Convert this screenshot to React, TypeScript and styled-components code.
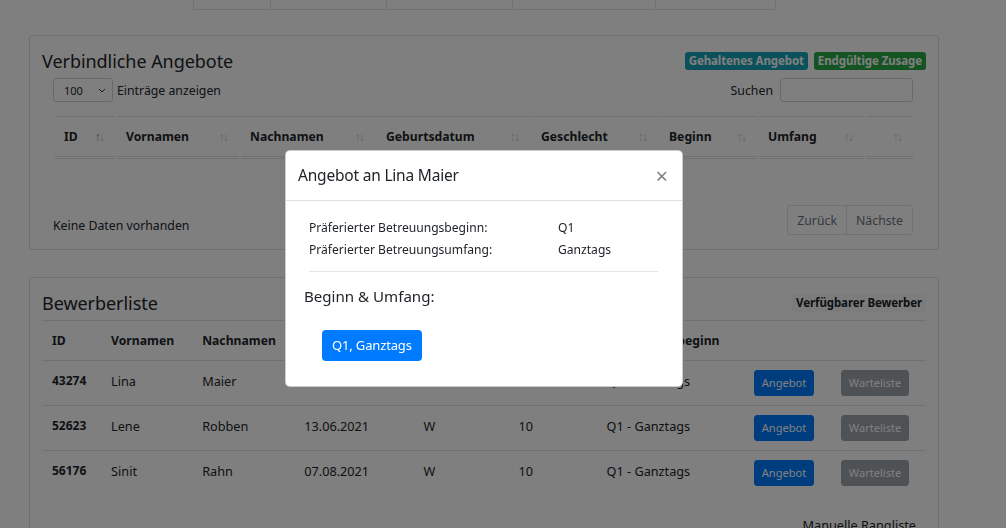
import React from "react";
import styled, { createGlobalStyle } from "styled-components";

const GlobalStyle = createGlobalStyle`
  html, body { margin: 0; padding: 0; background: #fff; }
  body {
    font-family: "Noto Sans", "Open Sans", sans-serif;
    font-size: 12.5px;
    color: #212529;
    overflow: hidden;
  }
  * { box-sizing: border-box; }
`;

const Page = styled.div`
  padding: 0 67px 0 29px;
  height: 528px;
  overflow: hidden;
`;

const TopTable = styled.div`
  display: flex;
  margin-left: 164px;
  width: 583px;
  height: 10px;
  border-left: 1px solid #dee2e6;
  border-bottom: 1px solid #dee2e6;
`;

const TopCell = styled.div<{ $w: number }>`
  width: ${(p) => p.$w}px;
  border-right: 1px solid #dee2e6;
`;

const Card = styled.div<{ $mt: number }>`
  margin-top: ${(p) => p.$mt}px;
  border: 1px solid rgba(0, 0, 0, 0.125);
  border-radius: 4px;
  padding: 12px 12px 14px;
  background: #fff;
`;

const CardHeader = styled.div`
  display: flex;
  align-items: center;
  justify-content: space-between;
  height: 26px;
`;

const Title = styled.h4`
  margin: 0;
  font-size: 18px;
  letter-spacing: -0.05px;
  font-weight: 400;
  line-height: 26px;
`;

const Badges = styled.div`
  display: flex;
  gap: 6px;
`;

const Badge = styled.span<{ $bg: string; $fg: string }>`
  display: inline-block;
  background: ${(p) => p.$bg};
  color: ${(p) => p.$fg};
  font-size: 11.5px;
  font-weight: 700;
  line-height: 18px;
  padding: 0 4px;
  letter-spacing: -0.1px;
  border-radius: 3px;
`;

const Wrapper = styled.div`
  padding: 0 13px 0 11px;
`;

const Controls = styled.div`
  display: flex;
  justify-content: space-between;
  align-items: center;
  margin-top: 4px;
  height: 24px;
`;

const Length = styled.label`
  display: flex;
  align-items: center;
  gap: 4px;
  font-size: 12.3px;
`;

const Select = styled.div`
  display: flex;
  align-items: center;
  justify-content: space-between;
  width: 60px;
  height: 24px;
  border: 1px solid #ced4da;
  border-radius: 3px;
  padding: 0 6px 0 10px;
  font-size: 11px;
`;

const Search = styled.label`
  display: flex;
  align-items: center;
  gap: 7px;
  font-size: 12.3px;
`;

const Input = styled.div`
  width: 133px;
  height: 24px;
  border: 1px solid #ced4da;
  border-radius: 3px;
`;

const DataTable = styled.table`
  width: 100%;
  margin-top: 14px;
  border-collapse: separate;
  border-spacing: 2px 0;
  table-layout: fixed;
`;

const SortTh = styled.th`
  border-top: 1px solid #dee2e6;
  border-bottom: 3px double #dee2e6;
  padding: 9px 10px 9px 9px;
  line-height: 21px;
  font-size: 12.2px;
  font-weight: 700;
  text-align: left;
`;

const ThInner = styled.div`
  display: flex;
  justify-content: space-between;
  align-items: center;
`;

const Arrows = styled.span<{ $active?: boolean }>`
  font-size: 12.5px;
  font-weight: 400;
  letter-spacing: -2px;
  padding-right: 2px;
  color: #cdcdcd;
  & > b {
    font-weight: 400;
    color: ${(p) => (p.$active ? "#8a8a8a" : "#cdcdcd")};
  }
`;

const Footer = styled.div`
  display: flex;
  justify-content: space-between;
  align-items: flex-start;
  margin-top: 46px;
  height: 30px;
  font-size: 12.3px;
`;

const InfoText = styled.span`
  padding-top: 10px;
  line-height: 21px;
`;

const Pager = styled.div`
  display: flex;
`;

const PageBtn = styled.span<{ $first?: boolean }>`
  display: inline-flex;
  align-items: center;
  height: 30px;
  padding: 0 9px;
  border: 1px solid #dee2e6;
  color: #6c757d;
  font-size: 12.3px;
  margin-left: ${(p) => (p.$first ? 0 : -1)}px;
  border-radius: ${(p) => (p.$first ? "3px 0 0 3px" : "0 3px 3px 0")};
`;

const ListTable = styled.table`
  width: 100%;
  margin-top: 4px;
  border-collapse: collapse;
  table-layout: fixed;
`;

const Th = styled.th`
  border-top: 1px solid #dee2e6;
  padding: 9px 10px;
  line-height: 21px;
  font-size: 12.2px;
  font-weight: 700;
  text-align: left;
  white-space: nowrap;
`;

const Td = styled.td<{ $bold?: boolean }>`
  border-top: 1px solid #dee2e6;
  padding: 7px 10px 11px;
  line-height: 26px;
  font-size: ${(p) => (p.$bold ? 12 : 12.7)}px;
  font-weight: ${(p) => (p.$bold ? 700 : 400)};
  vertical-align: middle;
  white-space: nowrap;
`;

const BtnCell = styled.td`
  border-top: 1px solid #dee2e6;
  padding: 9px 10px;
  vertical-align: middle;
  white-space: nowrap;
`;

const SmallBtn = styled.span<{ $variant: "primary" | "secondary" }>`
  display: inline-block;
  font-size: 11.1px;
  line-height: 18px;
  padding: 3px 7px;
  border-radius: 3px;
  border: 1px solid ${(p) => (p.$variant === "primary" ? "#007bff" : "#6c757d")};
  background: ${(p) => (p.$variant === "primary" ? "#007bff" : "#6c757d")};
  color: #fff;
  opacity: ${(p) => (p.$variant === "primary" ? 1 : 0.65)};
`;

const ListFooter = styled.div`
  display: flex;
  justify-content: flex-end;
  padding: 21px 10px 20px 0;
  font-size: 12.7px;
`;

const Backdrop = styled.div`
  position: fixed;
  inset: 0;
  background: rgba(0, 0, 0, 0.5);
  display: flex;
  align-items: flex-start;
  padding: 150px 0 0 285px;
`;

const Modal = styled.div`
  width: 398px;
  background: #fff;
  border: 1px solid rgba(0, 0, 0, 0.2);
  border-radius: 5px;
`;

const ModalHeader = styled.div`
  display: flex;
  justify-content: space-between;
  align-items: center;
  padding: 9px 13px 10px 12px;
  border-bottom: 1px solid #dee2e6;
`;

const ModalTitle = styled.h5`
  margin: 0;
  font-size: 15.5px;
  letter-spacing: -0.2px;
  font-weight: 400;
  line-height: 30px;
`;

const Close = styled.span`
  font-size: 22px;
  font-weight: 400;
  line-height: 1;
  color: #000;
  opacity: 0.5;
  margin-right: 1px;
`;

const ModalBody = styled.div`
  padding: 16px 19px 25px 18px;
`;

const Info = styled.div`
  margin: 0 5px;
`;

const InfoRow = styled.div`
  display: grid;
  grid-template-columns: 249px 1fr;
  line-height: 22px;
  font-size: 12.1px;
`;

const Hr = styled.hr`
  margin: 10px 5px 0;
  border: 0;
  border-top: 1px solid rgba(0, 0, 0, 0.1);
`;

const Subheading = styled.div`
  margin-top: 11px;
  font-size: 15.1px;
  line-height: 26px;
`;

const Choice = styled.span`
  display: inline-block;
  margin: 21px 0 0 18px;
  background: #007bff;
  color: #fff;
  border-radius: 4px;
  padding: 0 10px;
  line-height: 31px;
  font-size: 13px;
  letter-spacing: -0.15px;
`;

const Chevron = () => (
  <svg width="8" height="5" viewBox="0 0 8 5" fill="none">
    <path d="M1 1l3 3 3-3" stroke="#343a40" strokeWidth="1" />
  </svg>
);

const sortCols: { label: string; w: number; active?: boolean }[] = [
  { label: "ID", w: 60, active: true },
  { label: "Vornamen", w: 122 },
  { label: "Nachnamen", w: 134 },
  { label: "Geburtsdatum", w: 153 },
  { label: "Geschlecht", w: 126 },
  { label: "Beginn", w: 97 },
  { label: "Umfang", w: 105 },
  { label: "", w: 47 },
];

const listCols: { label: string; w: number }[] = [
  { label: "ID", w: 59 },
  { label: "Vornamen", w: 91 },
  { label: "Nachnamen", w: 102 },
  { label: "Geburtsdatum", w: 119 },
  { label: "Geschlecht", w: 95 },
  { label: "Punkte", w: 88 },
  { label: "Betreuungsbeginn", w: 147 },
  { label: "", w: 87 },
  { label: "", w: 95 },
];

const rows = [
  ["43274", "Lina", "Maier", "01.04.2021", "W", "10", "Q1 - Ganztags"],
  ["52623", "Lene", "Robben", "13.06.2021", "W", "10", "Q1 - Ganztags"],
  ["56176", "Sinit", "Rahn", "07.08.2021", "W", "10", "Q1 - Ganztags"],
];

export default function App() {
  return (
    <>
      <GlobalStyle />
      <Page>
        <TopTable>
          {[77, 116, 126, 143, 120].map((w, i) => (
            <TopCell key={i} $w={w} />
          ))}
        </TopTable>

        <Card $mt={25}>
          <CardHeader>
            <Title>Verbindliche Angebote</Title>
            <Badges>
              <Badge $bg="#17a2b8" $fg="#fff">Gehaltenes Angebot</Badge>
              <Badge $bg="#28a745" $fg="#fff">Endgültige Zusage</Badge>
            </Badges>
          </CardHeader>
          <Wrapper>
            <Controls>
              <Length>
                <Select>
                  <span>100</span>
                  <Chevron />
                </Select>
                Einträge anzeigen
              </Length>
              <Search>
                Suchen
                <Input />
              </Search>
            </Controls>
            <DataTable>
              <colgroup>
                {sortCols.map((c, i) => (
                  <col key={i} style={{ width: c.w }} />
                ))}
              </colgroup>
              <thead>
                <tr>
                  {sortCols.map((c, i) => (
                    <SortTh key={i}>
                      <ThInner>
                        <span>{c.label}</span>
                        <Arrows $active={c.active}>
                          <b>↑</b>↓
                        </Arrows>
                      </ThInner>
                    </SortTh>
                  ))}
                </tr>
              </thead>
            </DataTable>
            <Footer>
              <InfoText>Keine Daten vorhanden</InfoText>
              <Pager>
                <PageBtn $first>Zurück</PageBtn>
                <PageBtn>Nächste</PageBtn>
              </Pager>
            </Footer>
          </Wrapper>
        </Card>

        <Card $mt={27}>
          <CardHeader>
            <Title>Bewerberliste</Title>
            <Badge $bg="#f8f9fa" $fg="#212529">Verfügbarer Bewerber</Badge>
          </CardHeader>
          <ListTable>
            <colgroup>
              {listCols.map((c, i) => (
                <col key={i} style={{ width: c.w }} />
              ))}
            </colgroup>
            <thead>
              <tr>
                {listCols.map((c, i) => (
                  <Th key={i}>{c.label}</Th>
                ))}
              </tr>
            </thead>
            <tbody>
              {rows.map((r) => (
                <tr key={r[0]}>
                  <Td $bold>{r[0]}</Td>
                  {r.slice(1).map((v, i) => (
                    <Td key={i}>{v}</Td>
                  ))}
                  <BtnCell>
                    <SmallBtn $variant="primary">Angebot</SmallBtn>
                  </BtnCell>
                  <BtnCell>
                    <SmallBtn $variant="secondary">Warteliste</SmallBtn>
                  </BtnCell>
                </tr>
              ))}
            </tbody>
          </ListTable>
          <ListFooter>Manuelle Rangliste</ListFooter>
        </Card>
      </Page>

      <Backdrop>
        <Modal>
          <ModalHeader>
            <ModalTitle>Angebot an Lina Maier</ModalTitle>
            <Close>×</Close>
          </ModalHeader>
          <ModalBody>
            <Info>
              <InfoRow>
                <span>Präferierter Betreuungsbeginn:</span>
                <span>Q1</span>
              </InfoRow>
              <InfoRow>
                <span>Präferierter Betreuungsumfang:</span>
                <span>Ganztags</span>
              </InfoRow>
            </Info>
            <Hr />
            <Subheading>Beginn &amp; Umfang:</Subheading>
            <Choice>Q1, Ganztags</Choice>
          </ModalBody>
        </Modal>
      </Backdrop>
    </>
  );
}
